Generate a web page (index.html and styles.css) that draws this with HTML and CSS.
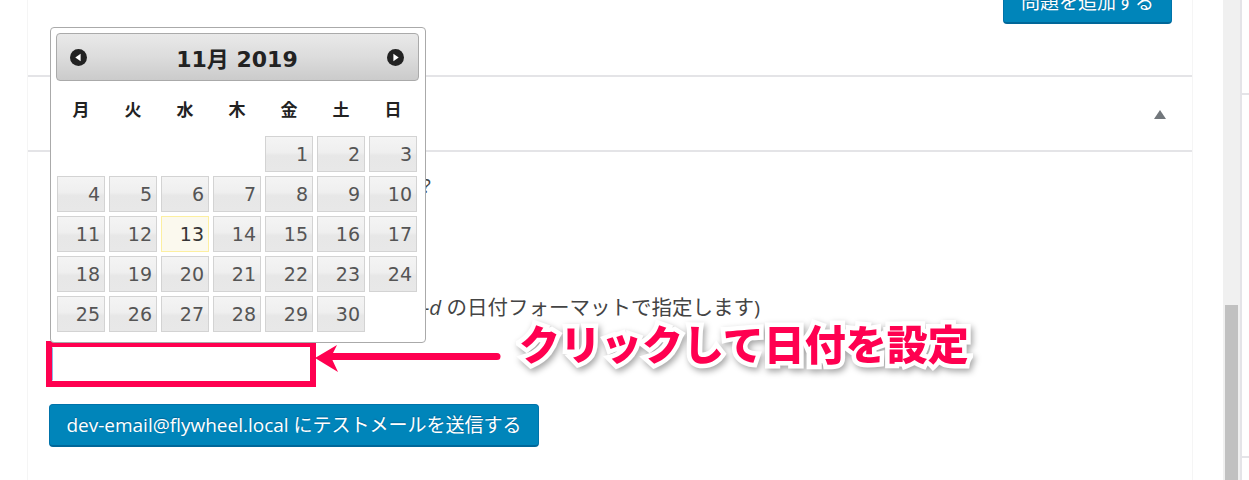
FILE: index.html
```html
<!DOCTYPE html>
<html lang="ja">
<head>
<meta charset="utf-8">
<title>テストメール</title>
<link rel="stylesheet" href="styles.css">
</head>
<body>
<div class="page">
  <div class="main">
    <div class="panel">
      <div class="toolbar">
        <button class="btn btn-top" type="button">問題を追加する</button>
      </div>
      <div class="section-head">
        <svg class="toggle" width="12" height="9" viewBox="0 0 12 9"><polygon points="6,0 12,9 0,9" fill="#72777c"/></svg>
      </div>
      <div class="section-body">
        <p class="line q">指定日時にテストメールを送信しますか?</p>
        <p class="line desc">テストメールを送信する日の選択 (Y-m<i>-d</i> の日付フォーマットで指定します)</p>
        <input class="date-input" type="text">
        <button class="btn btn-send" type="button">dev-email@flywheel.local にテストメールを送信する</button>
      </div>
    </div>
  </div>
  <div class="scroll-gap"></div>
  <div class="track"><div class="thumb"></div></div>
  <div class="edge"><span class="tick tick-a"></span><span class="tick tick-b"></span></div>

  <div class="datepicker">
    <div class="dp-header">
      <svg class="dp-nav" width="17" height="17" viewBox="0 0 16 16"><circle cx="8" cy="8" r="8" fill="#222"/><polygon points="5,8 10,4.5 10,11.5" fill="#fff"/></svg>
      <span class="dp-title">11月 2019</span>
      <svg class="dp-nav" width="17" height="17" viewBox="0 0 16 16"><circle cx="8" cy="8" r="8" fill="#222"/><polygon points="11,8 6,4.5 6,11.5" fill="#fff"/></svg>
    </div>
    <div class="dp-weekdays">
      <span>月</span><span>火</span><span>水</span><span>木</span><span>金</span><span>土</span><span>日</span>
    </div>
    <div class="dp-grid">
      <span class="dp-empty"></span><span class="dp-empty"></span><span class="dp-empty"></span><span class="dp-empty"></span>
      <span class="dp-day">1</span><span class="dp-day">2</span><span class="dp-day">3</span>
      <span class="dp-day">4</span><span class="dp-day">5</span><span class="dp-day">6</span><span class="dp-day">7</span><span class="dp-day">8</span><span class="dp-day">9</span><span class="dp-day">10</span>
      <span class="dp-day">11</span><span class="dp-day">12</span><span class="dp-day dp-today">13</span><span class="dp-day">14</span><span class="dp-day">15</span><span class="dp-day">16</span><span class="dp-day">17</span>
      <span class="dp-day">18</span><span class="dp-day">19</span><span class="dp-day">20</span><span class="dp-day">21</span><span class="dp-day">22</span><span class="dp-day">23</span><span class="dp-day">24</span>
      <span class="dp-day">25</span><span class="dp-day">26</span><span class="dp-day">27</span><span class="dp-day">28</span><span class="dp-day">29</span><span class="dp-day">30</span>
    </div>
  </div>

  <svg class="arrow" width="200" height="40" viewBox="310 336 200 40">
    <line x1="330" y1="356.5" x2="497" y2="356.5" stroke="#ff0050" stroke-width="7" stroke-linecap="round"/>
    <polygon points="315,358 337,345 331,357 338,372" fill="#ff0050"/>
  </svg>
  <div class="note">クリックして日付を設定</div>
</div>
</body>
</html>
```

FILE: styles.css
```css
* { box-sizing: border-box; }
html, body { margin: 0; padding: 0; background: #fff; }
body {
  font-family: "Open Sans", "Noto Sans CJK JP", sans-serif;
  color: #444;
}
.page {
  position: relative;
  width: 1249px;
  height: 480px;
  overflow: hidden;
  display: flex;
}
.main {
  width: 1193px;
  padding-left: 27px;
  flex: none;
}
.panel {
  height: 100%;
  border-left: 1px solid #f5f5f5;
  border-right: 1px solid #f5f5f5;
}
.toolbar {
  height: 75px;
  display: flex;
  justify-content: flex-end;
  padding-right: 20px;
}
.btn {
  font-family: "Open Sans", "Noto Sans CJK JP", sans-serif;
  font-size: 19px;
  color: #fff;
  background: #0085ba;
  border: 1px solid #0073aa;
  border-bottom-width: 2px;
  border-bottom-color: #006799;
  border-radius: 4px;
  height: 43px;
  padding: 0 16px;
  line-height: 38px;
  text-shadow: 0 -1px 1px #006799;
}
.btn-top {
  margin-top: -19px;
  width: 169px;
}
.section-head {
  height: 77px;
  border-top: 2px solid #e4e4e7;
  border-bottom: 2px solid #e4e4e7;
  display: flex;
  align-items: center;
  justify-content: flex-end;
  padding: 0 26px 0 40px;
}
.toggle { display: block; margin-top: 1px; }
.section-body {
  padding-left: 21px;
}
.line {
  margin: 0;
  font-size: 20.5px;
  line-height: 28px;
  white-space: nowrap;
}
.q { margin-top: 19px; padding-left: 4px; }
.desc { margin-top: 94px; padding-left: 18px; }
.date-input {
  display: block;
  margin: 26px 0 0 3px;
  width: 258px;
  height: 34px;
  border: 1px solid #fff;
  border-left-color: #8cb6e6;
  background: #fff;
  outline: 6px solid #ff0050;
}
.btn-send {
  display: block;
  margin-top: 23px;
  width: 490px;
  padding: 0;
}
.scroll-gap { width: 30px; flex: none; }
.track {
  width: 17px;
  flex: none;
  background: #f0f0f0;
  padding: 0 2px;
  display: flex;
  flex-direction: column;
  justify-content: flex-end;
}
.thumb { height: 175px; background: #c1c1c1; }
.edge {
  flex: 1;
  border-left: 2px solid #e4e4e8;
  display: flex;
  flex-direction: column;
}
.tick { display: block; height: 2px; background: #e4e4e8; }
.tick-a { margin-top: 93px; }
.tick-b { margin-top: 361px; }

/* datepicker overlay */
.datepicker {
  position: absolute;
  left: 50px;
  top: 27px;
  width: 376px;
  height: 316px;
  background: #fff;
  border: 1px solid #aaa;
  border-radius: 4px;
  padding: 5px 6px 0 5px;
  font-family: "DejaVu Sans", "Noto Sans CJK JP", sans-serif;
}
.dp-header {
  height: 48px;
  border: 1px solid #aaa;
  border-radius: 4px;
  background: linear-gradient(to bottom, #e9e9e9 0%, #dcdcdc 50%, #cbcbcb 100%);
  display: flex;
  align-items: center;
  padding: 0 14px 0 13px;
}
.dp-nav { display: block; flex: none; }
.dp-title {
  flex: 1;
  text-align: center;
  font-size: 22px;
  font-weight: bold;
  color: #222;
}
.dp-weekdays {
  height: 54px;
  display: grid;
  grid-template-columns: repeat(7, 48px);
  column-gap: 4px;
  padding-left: 1px;
  align-items: center;
  text-align: center;
  font-size: 17px;
  font-weight: bold;
  color: #222;
  padding-top: 1px;
}
.dp-grid {
  margin-top: 1px;
  padding-left: 1px;
  display: grid;
  grid-template-columns: repeat(7, 48px);
  grid-auto-rows: 36px;
  gap: 4px;
}
.dp-day {
  border: 1px solid #d3d3d3;
  background: linear-gradient(to bottom, #f4f4f4 0%, #efefef 45%, #e7e7e7 55%, #e8e8e8 100%);
  color: #555;
  font-size: 19px;
  text-align: right;
  padding-right: 4px;
  line-height: 34px;
}
.dp-today {
  border-color: #fcefa1;
  background: #fbf9ee;
  color: #363636;
}

/* annotation overlays */
.arrow {
  position: absolute;
  left: 310px;
  top: 336px;
}
.note {
  position: absolute;
  left: 519px;
  top: 314px;
  font-family: "Noto Sans CJK JP", sans-serif;
  font-weight: 900;
  font-size: 41px;
  line-height: 56px;
  color: #ff0050;
  -webkit-text-stroke: 9px #fff;
  paint-order: stroke fill;
  filter: drop-shadow(2px 3px 3px rgba(0, 0, 0, 0.35));
  white-space: nowrap;
}
```
